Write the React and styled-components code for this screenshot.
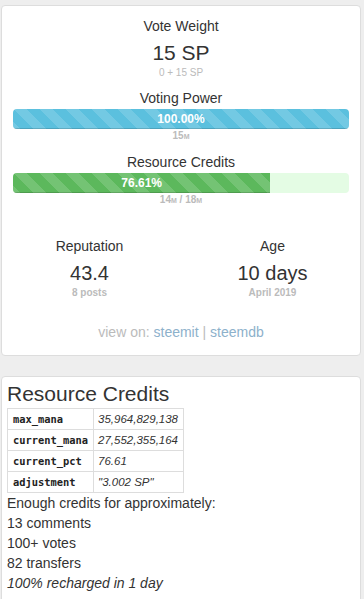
import styled, { createGlobalStyle } from 'styled-components'

const GlobalStyles = createGlobalStyle`
  html, body {
    margin: 0;
    background: #eeeeee;
  }
  body {
    padding: 5px 3px 0 1px;
    font-family: "Liberation Sans", Arial, sans-serif;
    color: #333;
  }
`

const rcRows = [
  ['max_mana', '35,964,829,138'],
  ['current_mana', '27,552,355,164'],
  ['current_pct', '76.61'],
  ['adjustment', '"3.002 SP"'],
]

function App() {
  return (
    <>
      <GlobalStyles />
      <Card>
        <Label>Vote Weight</Label>
        <Big>15 SP</Big>
        <Sub>0 + 15 SP</Sub>

        <Label>Voting Power</Label>
        <Track color="#f5f5f5">
          <Fill color="#5bc0de" style={{ width: '100%' }}>100.00%</Fill>
        </Track>
        <Amount>15<Unit>M</Unit></Amount>

        <Label spaced>Resource Credits</Label>
        <Track color="#e4fce4">
          <Fill color="#5cb85c" style={{ width: '76.61%' }}>76.61%</Fill>
        </Track>
        <Amount>14<Unit>M</Unit> / 18<Unit>M</Unit></Amount>

        <Stats>
          <Stat>
            <Label>Reputation</Label>
            <Medium>43.4</Medium>
            <Sub bold>8 posts</Sub>
          </Stat>
          <Stat>
            <Label>Age</Label>
            <Medium>10 days</Medium>
            <Sub bold>April 2019</Sub>
          </Stat>
        </Stats>

        <ViewOn>
          view on: <Link href="#">steemit</Link> | <Link href="#">steemdb</Link>
        </ViewOn>
      </Card>

      <Panel>
        <Heading>Resource Credits</Heading>
        <Table>
          <tbody>
            {rcRows.map(([k, v]) => (
              <tr key={k}>
                <Key>{k}</Key>
                <Val>{v}</Val>
              </tr>
            ))}
          </tbody>
        </Table>
        <Line>Enough credits for approximately:</Line>
        <Line>13 comments</Line>
        <Line>100+ votes</Line>
        <Line>82 transfers</Line>
        <Line italic>100% recharged in 1 day</Line>
      </Panel>
    </>
  )
}

const Card = styled.div`
  background: #fff;
  border: 1px solid #dddddd;
  border-radius: 4px;
  padding: 10px 11px 13px;
  text-align: center;
`
const Label = styled.div`
  font-size: 14px;
  line-height: 20px;
  margin-top: ${(p) => (p.spaced ? '8px' : '0')};
`
const Big = styled.div`
  font-size: 21px;
  line-height: 24px;
  margin-top: 5px;
`
const Medium = styled.div`
  font-size: 20px;
  line-height: 24px;
  margin-top: 5px;
`
const Sub = styled.div`
  font-size: 10px;
  font-weight: ${(p) => (p.bold ? 'bold' : 'normal')};
  line-height: 14px;
  color: #bbbbbb;
  margin-top: 1px;
  margin-bottom: 8px;
`
const Track = styled.div`
  display: flex;
  height: 20px;
  margin-top: 1px;
  border-radius: 4px;
  overflow: hidden;
  background: ${(p) => p.color};
`
const Fill = styled.div`
  height: 100%;
  background-color: ${(p) => p.color};
  background-image: linear-gradient(
    45deg,
    rgba(255, 255, 255, 0.15) 25%,
    transparent 25%,
    transparent 50%,
    rgba(255, 255, 255, 0.15) 50%,
    rgba(255, 255, 255, 0.15) 75%,
    transparent 75%,
    transparent
  );
  background-size: 26px 26px;
  box-shadow: inset 0 -1px 0 rgba(0, 0, 0, 0.15);
  color: #fff;
  font-size: 12px;
  font-weight: bold;
  line-height: 20px;
  text-align: center;
`
const Amount = styled.div`
  font-size: 10px;
  font-weight: bold;
  line-height: 14px;
  color: #bbbbbb;
`
const Unit = styled.span`
  font-size: 7px;
`
const Stats = styled.div`
  display: grid;
  grid-template-columns: 1fr 1fr;
  margin: 28px -15px 0;
`
const Stat = styled.div`
  text-align: center;
`
const ViewOn = styled.div`
  font-size: 14px;
  line-height: 20px;
  color: #bbbbbb;
  margin-top: 14px;
`
const Link = styled.a`
  color: #8db1cb;
  text-decoration: none;
`
const Panel = styled.div`
  background: #fff;
  border: 1px solid #dddddd;
  border-radius: 4px;
  margin-top: 20px;
  padding: 6px 5px 12px;
`
const Heading = styled.div`
  font-size: 21px;
  line-height: 22px;
  margin-bottom: 3px;
`
const Table = styled.table`
  border-collapse: collapse;
`
const Key = styled.td`
  border: 1px solid #dddddd;
  padding: 3px 5px 3px 5px;
  font-family: "DejaVu Sans Mono", "Liberation Mono", monospace;
  font-size: 10.4px;
  font-weight: bold;
  line-height: 14px;
  color: #222;
`
const Val = styled.td`
  border: 1px solid #dddddd;
  padding: 3px 5px 3px 4px;
  font-size: 11.5px;
  font-style: italic;
  line-height: 14px;
`
const Line = styled.div`
  font-size: 14px;
  line-height: 20px;
  font-style: ${(p) => (p.italic ? 'italic' : 'normal')};
`

export default App
